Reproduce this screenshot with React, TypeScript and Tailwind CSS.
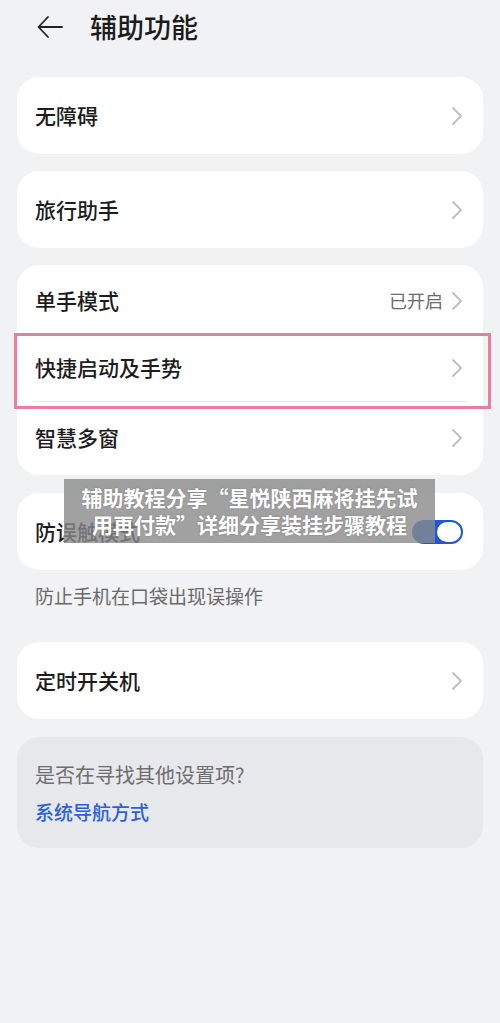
import type { ReactNode } from "react";

const FONT = { fontFamily: '"Noto Sans CJK SC", "Noto Sans", sans-serif' };

function Chevron() {
  return (
    <svg width="12" height="20" viewBox="0 0 12 20" fill="none" className="shrink-0">
      <path d="M2 2l8 8-8 8" stroke="#bdbdbd" strokeWidth="1.8" strokeLinecap="round" strokeLinejoin="round" />
    </svg>
  );
}

function Row({ label, value, right, h = "h-[77px]" }: { label: string; value?: string; right?: ReactNode; h?: string }) {
  return (
    <div className={`flex items-center justify-between px-[18px] ${h}`}>
      <span className="text-[21px] font-medium text-[#1c1c1c]">{label}</span>
      <div className="flex items-center gap-[8px] pr-[2px]">
        {value && <span className="text-[18px] text-[#6b6b6b]">{value}</span>}
        {right ?? <Chevron />}
      </div>
    </div>
  );
}

function Card({ children, className = "" }: { children: ReactNode; className?: string }) {
  return <div className={`mx-[17px] rounded-[22px] bg-white ${className}`}>{children}</div>;
}

function Toggle() {
  return (
    <div className="flex h-[24px] w-[51px] items-center justify-end rounded-full bg-[#1f57d6] p-[2px]">
      <div className="h-[20px] w-[24px] rounded-full bg-white" />
    </div>
  );
}

export default function App() {
  return (
    <div className="relative min-h-[1023px] w-full bg-[#f1f2f4]" style={FONT}>
      {/* Header */}
      <div className="flex h-[77px] items-start pl-[36px] pt-[12px]">
        <svg width="28" height="28" viewBox="0 0 28 28" fill="none" className="mt-[1px]">
          <path d="M26 14H3M12 4L2.5 14 12 24" stroke="#222" strokeWidth="1.8" strokeLinecap="round" strokeLinejoin="round" />
        </svg>
        <h1 className="ml-[26px] text-[27px] font-medium leading-[30px] text-[#1c1c1c]">辅助功能</h1>
      </div>

      <div className="flex flex-col gap-[17px]">
        <Card>
          <Row label="无障碍" />
        </Card>
        <Card>
          <Row label="旅行助手" />
        </Card>
        <Card className="py-[2px]">
          <Row label="单手模式" value="已开启" h="h-[67px]" />
          <div className="mx-[16px] h-px bg-[#e6e6e6]" />
          <Row label="快捷启动及手势" h="h-[66px]" />
          <div className="mx-[16px] h-px bg-[#e6e6e6]" />
          <Row label="智慧多窗" h="h-[71px]" />
        </Card>
      </div>

      <Card className="mt-[18px]">
        <Row label="防误触模式" right={<Toggle />} />
      </Card>
      <p className="h-[72px] px-[35px] pt-[12px] text-[19px] text-[#6a6a6a]">防止手机在口袋出现误操作</p>

      <Card>
        <Row label="定时开关机" />
      </Card>

      <div className="mx-[17px] mt-[18px] flex h-[111px] flex-col justify-center gap-[10px] rounded-[22px] bg-[#e7e8eb] px-[18px]">
        <span className="text-[20px] leading-[28px] text-[#6e6e6e]">是否在寻找其他设置项?</span>
        <span className="text-[19px] font-medium leading-[26px] text-[#2a62d4]">系统导航方式</span>
      </div>

      {/* highlight frame */}
      <div className="pointer-events-none absolute left-[14px] top-[333px] h-[76px] w-[477px] border-[3px] border-[#ea7c9c]" />

      {/* watermark caption */}
      <div className="absolute left-[64px] top-[479px] flex h-[64px] w-[371px] flex-col items-center justify-center bg-[#8a8a8a]/80 text-[21px] font-bold leading-[27px] text-white [text-shadow:0_0_2px_rgba(0,0,0,0.25)]">
        <span>辅助教程分享“星悦陕西麻将挂先试</span>
        <span>用再付款”详细分享装挂步骤教程</span>
      </div>
    </div>
  );
}
